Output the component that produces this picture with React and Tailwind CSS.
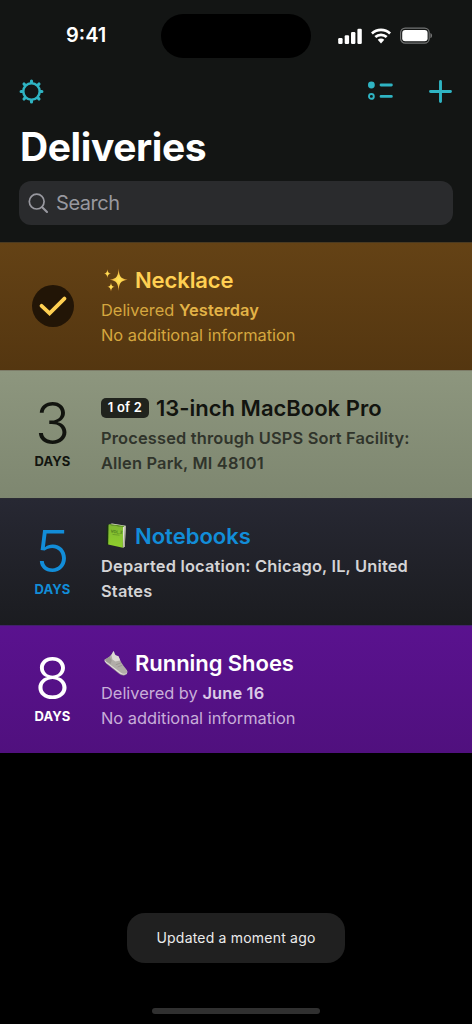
import React from 'react';

const SparklesIcon = () => (
    <svg width="24" height="24" viewBox="0 0 24 24">
        <defs>
            <radialGradient id="spark" cx="0.5" cy="0.5" r="0.5">
                <stop offset="0" stopColor="#ffe45c" />
                <stop offset="0.45" stopColor="#fbcf4a" />
                <stop offset="1" stopColor="#d98f35" />
            </radialGradient>
        </defs>
        <path fill="url(#spark)" d="M14.6 0.6C15.2 8 16 10.8 23.6 11.8C16 12.8 15.2 15.6 14.6 23C14 15.6 13.2 12.8 5.8 11.8C13.2 10.8 14 8 14.6 0.6Z" />
        <path fill="url(#spark)" d="M3.4 1.2C3.8 4.2 4.6 5.2 7 5.6C4.6 6 3.8 7 3.4 10C3 7 2.2 6 0 5.6C2.2 5.2 3 4.2 3.4 1.2Z" />
        <path fill="url(#spark)" d="M7 14.4C7.4 17.4 8.2 18.3 10.8 18.8C8.2 19.3 7.4 20.4 7 23.4C6.6 20.4 5.8 19.3 3.2 18.8C5.8 18.3 6.6 17.4 7 14.4Z" />
    </svg>
);

const BookIcon = () => (
    <svg width="24" height="26" viewBox="0 0 24 26">
        <defs>
            <linearGradient id="cover" x1="0" y1="0" x2="0" y2="1">
                <stop offset="0" stopColor="#7fb832" />
                <stop offset="1" stopColor="#8fd02c" />
            </linearGradient>
        </defs>
        <path fill="#16330f" d="M2.8 2.4L4.6 1.2L4.6 21.8L2.8 21.2Z" />
        <path fill="#e3e2d4" d="M4.6 1.4L8 0.6L21.8 2.8L20.8 23.8L18.8 24.8L18 3.6Z" />
        <path fill="#aaa997" d="M20.6 3.6L21.6 2.8L20.8 23.8L19.2 24.6Z" />
        <path fill="#5b911f" d="M4.5 1.8L6 1.1L20.6 3L19 4.2Z" />
        <path fill="url(#cover)" d="M4.5 1.8L19 4L18.8 24.8L4.2 21.6Z" />
        <text x="6.5" y="9.6" fontSize="4" fontWeight="600" fill="#42701a" fontFamily="Inter, sans-serif" transform="rotate(6 6.5 9.6)">VOL.2</text>
        <path stroke="#5e9123" strokeWidth="0.7" d="M8.5 11.4L15.5 12.2" />
    </svg>
);

const ShoeIcon = () => (
    <svg width="24" height="26" viewBox="0 0 24 26">
        <path fill="#e2dfdb" d="M0.6 9.4C0.2 10.6 1 12 2.2 13.2L15.8 24C17.8 25.4 20.6 25.6 22.4 24.2C23.6 23.2 23.5 21.4 22.8 20.2Z" />
        <path fill="#b1ada8" d="M1 9.2C3.8 8.2 7.4 5.4 9.4 1.2C10.2 1.2 10.2 3.4 11.2 4.8C12.2 6 13.8 5.8 14.6 6.6C15.8 10 18 14.8 22.4 19.4C23.6 21 23.6 22.4 22 23.4C20 24.2 18 23.6 16.6 22.4L2 11.6C1 10.8 0.6 9.8 1 9.2Z" />
        <path fill="#dedad6" d="M9.4 1.2C10.2 1.2 10.2 3.4 11.2 4.8C12.2 6 13.8 5.8 14.6 6.6L16.2 10.4L11.4 11.4L8.4 9.4L7.4 5Z" />
        <path fill="#9c9893" d="M1.4 9.2L5.4 6.8L7.8 10.2L6.6 14L2 11.2Z" />
        <path stroke="#938e89" strokeWidth="0.7" fill="none" d="M11.8 14.8L17 12.8M13.6 17L18.4 15.2" />
        <path stroke="#8d8883" strokeWidth="0.6" fill="none" d="M2.2 13.2L15.8 24C17.8 25.3 20.6 25.4 22.4 24.2" />
    </svg>
);

const deliveries = [
    {
        name: 'Necklace',
        icon: <SparklesIcon />,
        done: true,
        row: 'h-[128px] border-t border-[#4b3a20] bg-linear-to-b from-[#644215] to-[#543610]',
        title: 'text-[#ffd052] tracking-[-0.1px]',
        text: 'text-[#d5a73f]',
        lines: [<>Delivered <b className="font-semibold text-[#e3b347] tracking-[0.1px]">Yesterday</b></>, 'No additional information'],
    },
    {
        name: '13-inch MacBook Pro',
        badge: '1 of 2',
        days: 3,
        row: 'h-[128px] border-t border-[#7d7c68] bg-linear-to-b from-[#8d967e] to-[#7e8770]',
        count: 'text-[#12140f]',
        title: 'text-[#12140f]',
        text: 'text-[#30342b] font-semibold tracking-[0.18px]',
        lines: ['Processed through USPS Sort Facility:', 'Allen Park, MI 48101'],
    },
    {
        name: 'Notebooks',
        icon: <BookIcon />,
        days: 5,
        row: 'h-[127px] border-t border-[#2b2b34] bg-linear-to-b from-[#272833] to-[#1b1c20]',
        count: 'text-[#128dd8]',
        title: 'text-[#128dd8]',
        text: 'text-[#d4d4d6] font-semibold tracking-[0.18px]',
        lines: ['Departed location: Chicago, IL, United', 'States'],
    },
    {
        name: 'Running Shoes',
        icon: <ShoeIcon />,
        days: 8,
        row: 'h-[128px] border-t border-[#42206c] bg-linear-to-b from-[#5a128f] to-[#50107e]',
        count: 'text-white',
        title: 'text-white tracking-[-0.05px]',
        text: 'text-[#c8aed9]',
        lines: [<>Delivered by <b className="font-semibold text-[#dccbe7] tracking-[0.15px]">June 16</b></>, 'No additional information'],
    },
];

const StatusBar = () => (
    <div className="flex h-[72px] items-start pt-[14px]">
        <div className="w-[161px] pl-[66px] pt-[7px] text-[20px] leading-[29px] font-semibold text-white">9:41</div>
        <div className="h-[44px] w-[150px] rounded-full bg-black" />
        <div className="flex items-center pl-[27px] pt-[13px]">
            <svg width="25" height="16" viewBox="0 0 25 16" fill="#fff">
                <rect x="0.2" y="10" width="4.4" height="6" rx="1.2" />
                <rect x="6.7" y="7.2" width="4.4" height="8.8" rx="1.2" />
                <rect x="13" y="4" width="4.4" height="12" rx="1.2" />
                <rect x="19.4" y="0.8" width="4.4" height="15.2" rx="1.2" />
            </svg>
            <svg className="ml-[8px]" width="20" height="16" viewBox="0 0 20 16" fill="none" stroke="#fff" strokeWidth="2.7">
                <path d="M0.9 5.5C6 0.6 14 0.6 19.1 5.5" />
                <path d="M4.3 9.1C7.5 6.1 12.5 6.1 15.7 9.1" />
                <path fill="#fff" stroke="none" d="M6.7 11.8C8.6 10.2 11.4 10.2 13.3 11.8L10 15.4Z" />
            </svg>
            <svg className="ml-[9px]" width="33" height="17" viewBox="0 0 33 17">
                <rect x="0.6" y="1.1" width="28.6" height="15" rx="4.6" fill="none" stroke="#737474" strokeWidth="1.2" />
                <rect x="2.2" y="2.9" width="25.4" height="11.4" rx="3" fill="#fff" />
                <path fill="#737474" d="M30.4 6C32.6 6.8 32.6 10.4 30.4 11.2Z" />
            </svg>
        </div>
    </div>
);

const Toolbar = () => (
    <div className="flex h-[38px] items-center justify-between pl-[19px] pr-[19px]">
        <svg width="25" height="25" viewBox="-12.5 -12.5 25 25" fill="none" stroke="#2fb4c3" strokeLinecap="round">
            <circle r="8.2" strokeWidth="2.5" />
            <path strokeWidth="3.1" d="M0 -9.3V-10.4M0 9.3V10.4M-9.3 0H-10.4M9.3 0H10.4M-6.7 -6.7L-7.5 -7.5M6.7 -6.7L7.5 -7.5M-6.7 6.7L-7.5 7.5M6.7 6.7L7.5 7.5" />
        </svg>
        <div className="flex items-center gap-[35px]">
            <svg width="25" height="20" viewBox="0 0 25 20" fill="none" stroke="#2fb4c3" strokeLinecap="round">
                <circle cx="3.4" cy="4" r="3.4" fill="#2fb4c3" stroke="none" />
                <circle cx="3.4" cy="15.4" r="2.4" strokeWidth="1.9" />
                <path strokeWidth="2.8" d="M13 4H23.4M13 15.4H23.4" />
            </svg>
            <svg width="25" height="25" viewBox="0 0 25 25" stroke="#2fb4c3" strokeWidth="2.9" strokeLinecap="round">
                <path d="M12.5 2.5V22.5M2.5 12.5H22.5" />
            </svg>
        </div>
    </div>
);

const SearchField = () => (
    <div className="mx-[19px] mt-[10px] flex h-[44px] items-center rounded-[12px] bg-[#2a2b2d] pl-[9px] text-[#98989f]">
        <svg width="21" height="21" viewBox="0 0 21 21" fill="none" stroke="currentColor" strokeLinecap="round">
            <circle cx="8.7" cy="8.6" r="7.4" strokeWidth="1.7" />
            <path strokeWidth="2.1" d="M14.2 14.2L19 19" />
        </svg>
        <span className="ml-[7px] text-[20px] leading-[28px] tracking-[-0.45px]">Search</span>
    </div>
);

const Delivery = ({ item }) => (
    <div className={`flex ${item.row}`}>
        <div className="flex w-[101px] flex-col items-center">
            {item.done ? (
                <div className="mt-[42px] ml-[5px] flex size-[42px] items-center justify-center rounded-full bg-[#221506]">
                    <svg width="28" height="22" viewBox="0 0 28 22" fill="none" stroke="#ffd052" strokeWidth="3.8" strokeLinecap="round" strokeLinejoin="miter">
                        <path d="M2.6 10.8L10.6 18.4L25.4 3.6" />
                    </svg>
                </div>
            ) : (
                <div className={`ml-[4px] text-center ${item.count}`}>
                    <div className="mt-[21px] h-[60px] text-[58px] leading-[62px] font-light">{item.days}</div>
                    <div className="text-[13px] leading-[18px] font-bold tracking-[0.1px]">DAYS</div>
                </div>
            )}
        </div>
        <div className="pt-[22px] whitespace-nowrap">
            <div className={`flex h-[30px] items-center text-[22px] font-semibold ${item.title}`}>
                {item.icon && <span className="ml-[3px] mr-[7px] w-[24px]">{item.icon}</span>}
                {item.badge && (
                    <span className="mr-[7px] h-[20px] w-[48px] rounded-[5px] bg-[#20231d] text-center text-[13px] leading-[19px] tracking-[0.2px] text-white">{item.badge}</span>
                )}
                <span>{item.name}</span>
            </div>
            <div className={`mt-[3px] text-[16.4px] leading-[25px] ${item.text}`}>
                {item.lines.map((line, i) => <div key={i}>{line}</div>)}
            </div>
        </div>
    </div>
);

const App = () => {
    return (
        <div className="flex h-[1024px] w-[472px] flex-col overflow-hidden bg-black font-['Inter','Liberation_Sans',sans-serif]">
            <header className="h-[242px] shrink-0 bg-[#131514]">
                <StatusBar />
                <Toolbar />
                <h1 className="ml-[20px] mt-[13px] mb-[11px] h-[47px] text-[39px] leading-[47px] font-bold tracking-[-0.4px] text-white">Deliveries</h1>
                <SearchField />
            </header>
            <main>
                {deliveries.map(item => <Delivery key={item.name} item={item} />)}
            </main>
            <footer className="flex grow flex-col items-center pt-[160px]">
                <div className="h-[50px] w-[218px] rounded-[18px] bg-[#202020] text-center text-[14px] leading-[50px] text-[#ececec] tracking-[0.2px]">Updated a moment ago</div>
                <div className="mt-[45px] h-[6px] w-[168px] rounded-full bg-[#303030]" />
            </footer>
        </div>
    );
};

export default App;
